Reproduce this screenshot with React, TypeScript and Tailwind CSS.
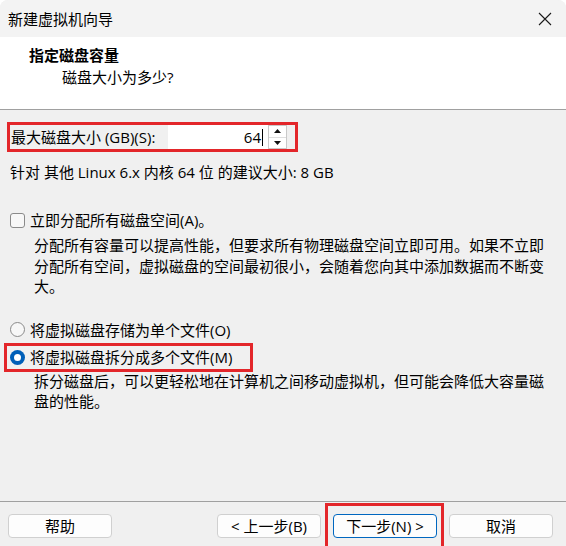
import React from "react";

function CloseIcon() {
  return (
    <svg width="14" height="14" viewBox="0 0 14 14" fill="none" stroke="#1a1a1a" strokeWidth="1.1">
      <path d="M1 1 L13 13 M13 1 L1 13" />
    </svg>
  );
}

function Spinner() {
  return (
    <div className="w-[19px] h-[24px] flex flex-col border border-[#c9c9c9] bg-white">
      <div className="flex-1 flex items-center justify-center border-b border-[#dedede]">
        <svg width="7" height="4" viewBox="0 0 7 4"><path d="M3.5 0 L7 4 L0 4 Z" fill="#111" /></svg>
      </div>
      <div className="flex-1 flex items-center justify-center">
        <svg width="7" height="4" viewBox="0 0 7 4"><path d="M0 0 L7 0 L3.5 4 Z" fill="#111" /></svg>
      </div>
    </div>
  );
}

function Checkbox() {
  return <div className="w-[15px] h-[15px] rounded-[3px] border border-[#8a8a8a] bg-[#f7f7f7] shrink-0" />;
}

function Radio({ checked }: { checked?: boolean }) {
  if (checked) {
    return (
      <div className="w-[15px] h-[15px] rounded-full bg-[#005fb8] flex items-center justify-center shrink-0">
        <div className="w-[7px] h-[7px] rounded-full bg-white" />
      </div>
    );
  }
  return <div className="w-[15px] h-[15px] rounded-full border border-[#8a8a8a] bg-[#f7f7f7] shrink-0" />;
}

function Button({ label, primary }: { label: string; primary?: boolean }) {
  return (
    <div
      className={
        "w-[104px] h-[24px] rounded-[4px] bg-[#fdfdfd] flex items-center justify-center text-[15px] leading-none " +
        (primary ? "border border-[#0067c0]" : "border border-[#d0d0d0]")
      }
    >
      {label}
    </div>
  );
}

export default function App() {
  return (
    <div className="w-[566px] h-[546px] bg-[#f0f0f0] flex flex-col overflow-hidden rounded-t-[8px] text-[#000] font-['Open_Sans','Noto_Sans_CJK_SC',sans-serif] text-[15px]">
      {/* title bar */}
      <div className="h-[37px] bg-[#f3f3f3] flex items-center justify-between pl-[8px] pr-[14px] shrink-0">
        <span className="leading-[20px]">新建虚拟机向导</span>
        <CloseIcon />
      </div>

      {/* header */}
      <div className="h-[73px] bg-white border-b border-[#a0a0a0] shrink-0 pt-[8px]">
        <div className="pl-[29px] font-bold leading-[20px]">指定磁盘容量</div>
        <div className="pl-[62px] mt-[2px] leading-[20px]">磁盘大小为多少?</div>
      </div>

      {/* body */}
      <div className="flex-1 flex flex-col">
        <div className="mt-[12px] ml-[7px] w-[291px] h-[30px] border-[3px] border-[#e3262a] flex items-center pl-[1px] pr-[8px]">
          <span className="leading-[20px] w-[157px] whitespace-nowrap">最大磁盘大小 (GB)(S):</span>
          <div className="w-[100px] h-[24px] bg-white flex items-center justify-end pr-[5px]">
            <span className="leading-[20px]">64</span>
            <span className="w-px h-[17px] bg-black ml-px" />
          </div>
          <Spinner />
        </div>

        <div className="mt-[10px] pl-[10px] leading-[20px]">针对 其他 Linux 6.x 内核 64 位 的建议大小: 8 GB</div>

        <div className="mt-[28px] pl-[10px] flex items-center gap-[5px] h-[20px]">
          <Checkbox />
          <span className="leading-[20px]">立即分配所有磁盘空间(A)。</span>
        </div>
        <div className="mt-[5px] pl-[34px] pr-[20px] leading-[20.5px]">
          分配所有容量可以提高性能，但要求所有物理磁盘空间立即可用。如果不立即
          <br />
          分配所有空间，虚拟磁盘的空间最初很小，会随着您向其中添加数据而不断变
          <br />
          大。
        </div>

        <div className="mt-[23px] pl-[10px] flex items-center gap-[5px] h-[20px]">
          <Radio />
          <span className="leading-[20px]">将虚拟磁盘存储为单个文件(O)</span>
        </div>
        <div className="mt-[3px] ml-[4px] w-[249px] h-[29px] border-[3px] border-[#e3262a] flex items-center pl-[3px] gap-[5px]">
          <Radio checked />
          <span className="leading-[20px]">将虚拟磁盘拆分成多个文件(M)</span>
        </div>
        <div className="-mt-px pl-[34px] leading-[20.5px]">
          拆分磁盘后，可以更轻松地在计算机之间移动虚拟机，但可能会降低大容量磁
          <br />
          盘的性能。
        </div>
      </div>

      {/* footer */}
      <div className="h-[45px] border-t border-[#a0a0a0] shrink-0 flex items-start pt-[12px] pl-[8px] pr-[13px]">
        <Button label="帮助" />
        <div className="ml-auto flex gap-[12px]">
          <Button label="< 上一步(B)" />
          <div className="relative">
            <Button label="下一步(N) >" primary />
            <div className="absolute left-[-8px] right-[-7px] top-[-11px] h-[50px] border-[3px] border-[#e3262a]" />
          </div>
          <Button label="取消" />
        </div>
      </div>
    </div>
  );
}
